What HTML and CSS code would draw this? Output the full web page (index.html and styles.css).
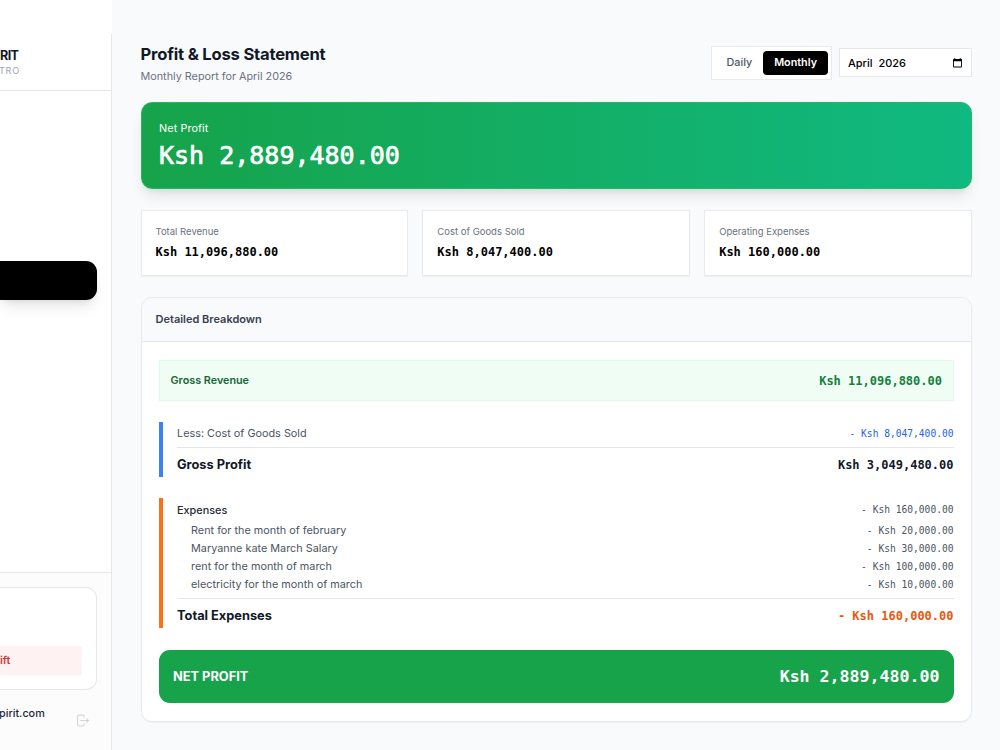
FILE: index.html
```html
<!DOCTYPE html>
<html lang="en">
<head>
    <meta charset="UTF-8">
    <meta name="viewport" content="width=device-width, initial-scale=1.0">
    <title>Profit &amp; Loss Statement</title>
    <link rel="stylesheet" href="styles.css">
</head>
<body>

    <aside class="sidebar">
        <div class="sidebar-top"></div>
        <div class="brand">
            <div class="brand-name">RIT</div>
            <div class="brand-sub">TRO</div>
        </div>
        <nav class="nav">
            <a class="nav-active" href="#" aria-label="Profit and loss"></a>
        </nav>
        <div class="sidebar-footer">
            <div class="shift-card">
                <button class="shift-button">ift</button>
            </div>
            <div class="user">
                <span class="user-email">pirit.com</span>
                <svg class="logout" viewBox="0 0 12 12" fill="none" stroke="currentColor">
                    <path d="M7.5 3.5V2a1 1 0 0 0-1-1h-4a1 1 0 0 0-1 1v8a1 1 0 0 0 1 1h4a1 1 0 0 0 1-1V8.5M4 6h7.5M9.5 4l2 2-2 2"/>
                </svg>
            </div>
        </div>
    </aside>

    <main class="content">
        <header class="page-header">
            <div>
                <h1>Profit &amp; Loss Statement</h1>
                <p class="subtitle">Monthly Report for April 2026</p>
            </div>
            <div class="controls">
                <div class="toggle">
                    <button>Daily</button>
                    <button class="active">Monthly</button>
                </div>
                <div class="month-picker">
                    <span>April&nbsp; 2026</span>
                    <svg class="calendar" viewBox="0 0 10 11">
                        <path fill="currentColor" fill-rule="evenodd" d="M1.5 0h1v1h5V0h1v1H9a1 1 0 0 1 1 1v7.500a1 1 0 0 1-1 1H1a1 1 0 0 1-1-1V2a1 1 0 0 1 1-1h.5zM1 3.500v6h8v-6z"/>
                    </svg>
                </div>
            </div>
        </header>

        <section class="hero">
            <div class="hero-label">Net Profit</div>
            <div class="hero-value">Ksh 2,889,480.00</div>
        </section>

        <section class="stats">
            <div class="stat">
                <div class="stat-label">Total Revenue</div>
                <div class="stat-value">Ksh 11,096,880.00</div>
            </div>
            <div class="stat">
                <div class="stat-label">Cost of Goods Sold</div>
                <div class="stat-value">Ksh 8,047,400.00</div>
            </div>
            <div class="stat">
                <div class="stat-label">Operating Expenses</div>
                <div class="stat-value">Ksh 160,000.00</div>
            </div>
        </section>

        <section class="breakdown">
            <h2>Detailed Breakdown</h2>
            <div class="breakdown-body">
                <div class="row revenue">
                    <span>Gross Revenue</span>
                    <span class="amount">Ksh 11,096,880.00</span>
                </div>

                <div class="group cogs">
                    <div class="row">
                        <span>Less: Cost of Goods Sold</span>
                        <span class="amount">- Ksh 8,047,400.00</span>
                    </div>
                    <div class="row total">
                        <span>Gross Profit</span>
                        <span class="amount">Ksh 3,049,480.00</span>
                    </div>
                </div>

                <div class="group expenses">
                    <div class="row heading">
                        <span>Expenses</span>
                        <span class="amount">- Ksh 160,000.00</span>
                    </div>
                    <div class="row item">
                        <span>Rent for the month of february</span>
                        <span class="amount">- Ksh 20,000.00</span>
                    </div>
                    <div class="row item">
                        <span>Maryanne kate March Salary</span>
                        <span class="amount">- Ksh 30,000.00</span>
                    </div>
                    <div class="row item">
                        <span>rent for the month of march</span>
                        <span class="amount">- Ksh 100,000.00</span>
                    </div>
                    <div class="row item">
                        <span>electricity for the month of march</span>
                        <span class="amount">- Ksh 10,000.00</span>
                    </div>
                    <div class="row total">
                        <span>Total Expenses</span>
                        <span class="amount">- Ksh 160,000.00</span>
                    </div>
                </div>

                <div class="row net">
                    <span>NET PROFIT</span>
                    <span class="amount">Ksh 2,889,480.00</span>
                </div>
            </div>
        </section>
    </main>

</body>
</html>
```
FILE: styles.css
```css
* {
    box-sizing: border-box;
}

body {
    display: flex;
    height: 750px;
    margin: 0;
    overflow: hidden;
    background-color: #f9fafb;
    color: #111827;
    font-family: Inter, sans-serif;
    font-size: 11.5px;
}

h1, h2, p {
    margin: 0;
}

button {
    border: none;
    background: none;
    font-family: inherit;
    cursor: pointer;
}

/* Sidebar */
.sidebar {
    display: flex;
    flex-direction: column;
    flex: none;
    width: 112px;
}

.sidebar-top {
    height: 34px;
    background-color: #fff;
}

.brand {
    height: 57px;
    padding-top: 14px;
    background-color: #fff;
    border-right: 1px solid #e5e7eb;
    border-bottom: 1px solid #e5e7eb;
}

.brand-name {
    font-size: 12.6px;
    font-weight: 700;
    line-height: 16px;
    letter-spacing: -0.6px;
}

.brand-sub {
    margin-left: -1px;
    color: #9ca3af;
    font-size: 9px;
    line-height: 13px;
    letter-spacing: 0.8px;
}

.nav {
    flex: 1;
    padding: 170px 14px 0 0;
    background-color: #fff;
    border-right: 1px solid #e5e7eb;
}

.nav-active {
    display: block;
    height: 39px;
    background-color: #000;
    border-radius: 0 11px 11px 0;
    box-shadow: 0 9px 14px -3px rgba(0, 0, 0, 0.1), 0 4px 6px -4px rgba(0, 0, 0, 0.1);
}

.sidebar-footer {
    height: 178px;
    padding: 14px 14px 0 0;
    background-color: #fcfcfc;
    border-top: 1px solid #e5e7eb;
    border-right: 1px solid #e5e7eb;
}

.shift-card {
    height: 103px;
    padding: 58px 14px 0 0;
    background-color: #fff;
    border: 1px solid #e5e7eb;
    border-left: none;
    border-radius: 0 11px 11px 0;
}

.shift-button {
    display: block;
    width: 100%;
    height: 29px;
    padding: 0;
    background-color: #fef2f2;
    color: #cb3a3a;
    font-size: 10.8px;
    font-weight: 600;
    text-align: left;
}

.user {
    display: flex;
    justify-content: space-between;
    padding: 16px 8px 0 0;
}

.user-email {
    margin-left: -1px;
    color: #1f2937;
    font-size: 10.8px;
    font-weight: 500;
    line-height: 16px;
}

.logout {
    width: 13px;
    height: 13px;
    margin-top: 8px;
    color: #d1d5db;
}

/* Main column */
.content {
    flex: 1;
    padding: 43px 28px 0 28.5px;
}

.page-header {
    display: flex;
    justify-content: space-between;
    height: 58.5px;
}

h1 {
    font-size: 16.6px;
    line-height: 22px;
    letter-spacing: -0.2px;
}

.subtitle {
    margin-top: 4px;
    color: #6b7280;
    font-size: 10.8px;
    line-height: 16px;
}

.controls {
    display: flex;
    align-items: center;
    gap: 7px;
    height: 39px;
}

.toggle {
    display: flex;
    height: 34px;
    padding: 4px 3px;
    background-color: #fff;
    border: 1px solid #e8eaed;
}

.toggle button {
    padding: 0 11px;
    border-radius: 4px;
    color: #4b5563;
    font-size: 10.8px;
    font-weight: 500;
}

.toggle .active {
    background-color: #000;
    color: #fff;
    font-weight: 600;
}

.month-picker {
    display: flex;
    align-items: center;
    justify-content: space-between;
    width: 133px;
    height: 29px;
    padding: 0 9px 0 8px;
    background-color: #fff;
    border: 1px solid #e5e7eb;
    color: #000;
    font-size: 11px;
    font-weight: 500;
}

.calendar {
    width: 9px;
    height: 10px;
}

.hero {
    height: 87.5px;
    padding: 19px 17.5px;
    background: linear-gradient(to right, #16a34a, #10b981);
    border: 1px solid #22b866;
    border-radius: 11px;
    box-shadow: 0 9px 14px -3px rgba(0, 0, 0, 0.1), 0 4px 6px -4px rgba(0, 0, 0, 0.1);
    color: #fff;
}

.hero-label {
    font-size: 10.8px;
    line-height: 14px;
    letter-spacing: 0.1px;
}

.hero-value {
    margin-top: 4px;
    font-family: "DejaVu Sans Mono", monospace;
    font-size: 25px;
    line-height: 32px;
    -webkit-text-stroke: 0.7px #fff;
}

.stats {
    display: grid;
    grid-template-columns: repeat(3, 1fr);
    gap: 14px;
    margin-top: 21px;
}

.stat {
    height: 66px;
    padding: 14px;
    background-color: #fff;
    border: 1px solid #e8eaed;
    box-shadow: 0 1px 1px rgba(0, 0, 0, 0.04);
}

.stat-label {
    color: #6b7280;
    font-size: 9.5px;
    line-height: 14px;
}

.stat-value {
    margin-top: 5px;
    color: #000;
    font-family: "DejaVu Sans Mono", monospace;
    font-size: 12px;
    font-weight: 700;
    line-height: 16px;
}

/* Breakdown card */
.breakdown {
    height: 425px;
    margin-top: 21px;
    background-color: #fff;
    border: 1px solid #e8eaed;
    border-radius: 11px;
    box-shadow: 0 1px 1px rgba(0, 0, 0, 0.04);
    overflow: hidden;
}

h2 {
    height: 44px;
    padding-left: 14px;
    background-color: #f9fafb;
    border-bottom: 1px solid #e5e7eb;
    color: #374151;
    font-size: 11px;
    font-weight: 600;
    line-height: 43px;
}

.breakdown-body {
    padding: 18px 17.5px;
}

.row {
    display: flex;
    align-items: center;
    justify-content: space-between;
}

.amount {
    font-family: "DejaVu Sans Mono", monospace;
    font-size: 9.6px;
}

.revenue {
    height: 41px;
    padding: 0 10.5px;
    background-color: #f0fdf4;
    border: 1px solid #dcfce7;
    color: #166534;
    font-weight: 600;
    font-size: 10.8px;
}

.revenue .amount {
    color: #15803d;
    font-size: 12px;
    font-weight: 700;
}

.group {
    margin-top: 21px;
    padding-left: 14px;
    border-left: 4px solid #3b82f6;
    color: #4b5563;
    font-size: 10.85px;
}

.cogs {
    height: 55px;
}

.cogs .row {
    height: 25px;
    padding-bottom: 3px;
}

.cogs .amount {
    color: #2563eb;
}

.group .total {
    height: 30px;
    padding: 4px 0 0;
    border-top: 1px solid #e5e7eb;
    color: #111827;
    font-size: 12.8px;
    font-weight: 650;
}

.total .amount {
    color: #111827;
    font-size: 12px;
    font-weight: 700;
}

.expenses {
    border-color: #f97316;
}

.expenses .heading {
    height: 23px;
    color: #1f2937;
    font-weight: 500;
}

.expenses .heading .amount {
    color: #4b5563;
    font-weight: 400;
}

.expenses .item {
    height: 18px;
    padding-left: 14px;
}

.expenses .total {
    margin-top: 5px;
}

.expenses .total .amount {
    color: #ea580c;
}

.net {
    height: 53px;
    margin-top: 22px;
    padding: 0 14px;
    background-color: #16a34a;
    border-radius: 11px;
    color: #fff;
    font-size: 12.8px;
    font-weight: 650;
}

.net .amount {
    font-size: 16.6px;
    font-weight: 700;
}
```
